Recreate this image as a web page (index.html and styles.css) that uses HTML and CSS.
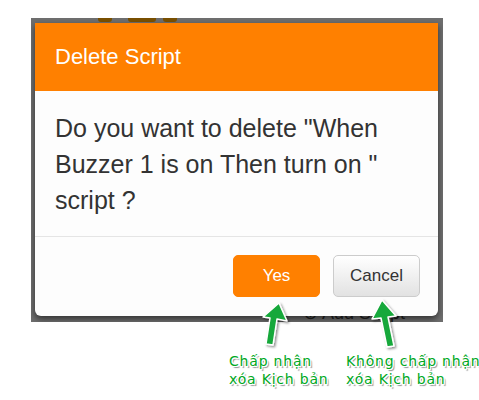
FILE: index.html
```html
<!DOCTYPE html>
<html>
<head>
<meta charset="utf-8">
<link rel="stylesheet" href="styles.css">
</head>
<body>
<div class="scene">
  <div class="bg-tabs">
    <span class="tab t1"></span><span class="tab t2"></span><span class="tab t3"></span>
  </div>
  <div class="bg-add">⊕ Add Script</div>
  <div class="dialog">
    <div class="dialog-header">Delete Script</div>
    <div class="dialog-body">Do you want to delete "When Buzzer 1 is on Then turn on " script ?</div>
    <div class="dialog-footer">
      <button class="btn btn-yes">Yes</button>
      <button class="btn btn-cancel">Cancel</button>
    </div>
  </div>
</div>
<svg class="arrows" width="479" height="400" viewBox="0 0 479 400">
  <defs>
    <filter id="sh" x="-50%" y="-50%" width="200%" height="200%">
      <feDropShadow dx="1.5" dy="1.5" stdDeviation="1" flood-color="#000" flood-opacity="0.45"/>
    </filter>
  </defs>
  <path filter="url(#sh)" d="M279 303 L287 321 L277 319 L273 345 L266 344 L270 318 L263 317 Z" fill="#17a83a" stroke="#fff" stroke-width="1.5" stroke-linejoin="round"/>
  <path filter="url(#sh)" d="M382 300 L396 316 L388 317 L394 346 L387 347 L381 318 L372 319 Z" fill="#17a83a" stroke="#fff" stroke-width="1.5" stroke-linejoin="round"/>
</svg>
<div class="note note-1">Chấp nhận<br>xóa Kịch bản</div>
<div class="note note-2">Không chấp nhận<br>xóa Kịch bản</div>
</body>
</html>
```
FILE: styles.css
```css
html, body {
  margin: 0;
  padding: 0;
  background: #fff;
}
body {
  width: 479px;
  height: 400px;
  position: relative;
  overflow: hidden;
  font-family: "Liberation Sans", Arial, sans-serif;
}
.scene {
  position: relative;
  margin: 18px 0 0 31px;
  width: 412px;
  height: 304px;
  box-sizing: border-box;
  padding: 5px 5px 6px 4px;
  background: #6e6e6e;
  overflow: hidden;
}
.bg-tabs {
  position: absolute;
  top: 0;
  left: 0;
  width: 100%;
  height: 5px;
}
.tab {
  position: absolute;
  top: 0;
  height: 4px;
  background: #7a5000;
  border-radius: 0 0 3px 3px;
}
.t1 { left: 67px; width: 14px; }
.t2 { left: 97px; width: 28px; }
.t3 { left: 132px; width: 14px; }
.bg-add {
  position: absolute;
  left: 272px;
  bottom: 0;
  font-size: 18px;
  line-height: 18px;
  color: #222;
  white-space: nowrap;
}
.dialog {
  position: relative;
  height: 293px;
  background: #fdfdfd;
  border-radius: 0 0 6px 6px;
  box-shadow: 0 3px 6px rgba(0, 0, 0, 0.55);
  display: flex;
  flex-direction: column;
}
.dialog-header {
  height: 68px;
  background: #ff8000;
  color: #fff;
  font-size: 22px;
  line-height: 68px;
  padding-left: 20px;
  box-sizing: border-box;
}
.dialog-body {
  padding: 19px 20px 18px 20px;
  font-size: 25px;
  line-height: 36px;
  color: #333;
  border-bottom: 1px solid #e5e5e5;
}
.dialog-footer {
  display: flex;
  justify-content: flex-end;
  gap: 13px;
  padding: 18px 18px 0 0;
}
.btn {
  width: 87px;
  height: 42px;
  border-radius: 5px;
  font-family: "Liberation Sans", Arial, sans-serif;
  font-size: 17px;
  cursor: pointer;
}
.btn-yes {
  background: #ff8000;
  color: #fff;
  border: 1px solid #ff8000;
}
.btn-cancel {
  background: linear-gradient(#ffffff, #e2e2e2);
  color: #333;
  border: 1px solid #cccccc;
}
.arrows {
  position: absolute;
  left: 0;
  top: 0;
  pointer-events: none;
}
.note {
  position: absolute;
  font-family: "DejaVu Sans", sans-serif;
  font-size: 14px;
  letter-spacing: 0.8px;
  line-height: 18px;
  color: #00a823;
  white-space: nowrap;
  text-shadow:
    -1px 0 #fff, 1px 0 #fff, 0 -1px #fff, 0 1px #fff,
    -1px -1px #fff, 1px 1px #fff, -1px 1px #fff, 1px -1px #fff,
    2px 2px 1px rgba(0, 0, 0, 0.45);
}
.note-1 {
  left: 229px;
  top: 352px;
}
.note-2 {
  left: 346px;
  top: 352px;
}
```
